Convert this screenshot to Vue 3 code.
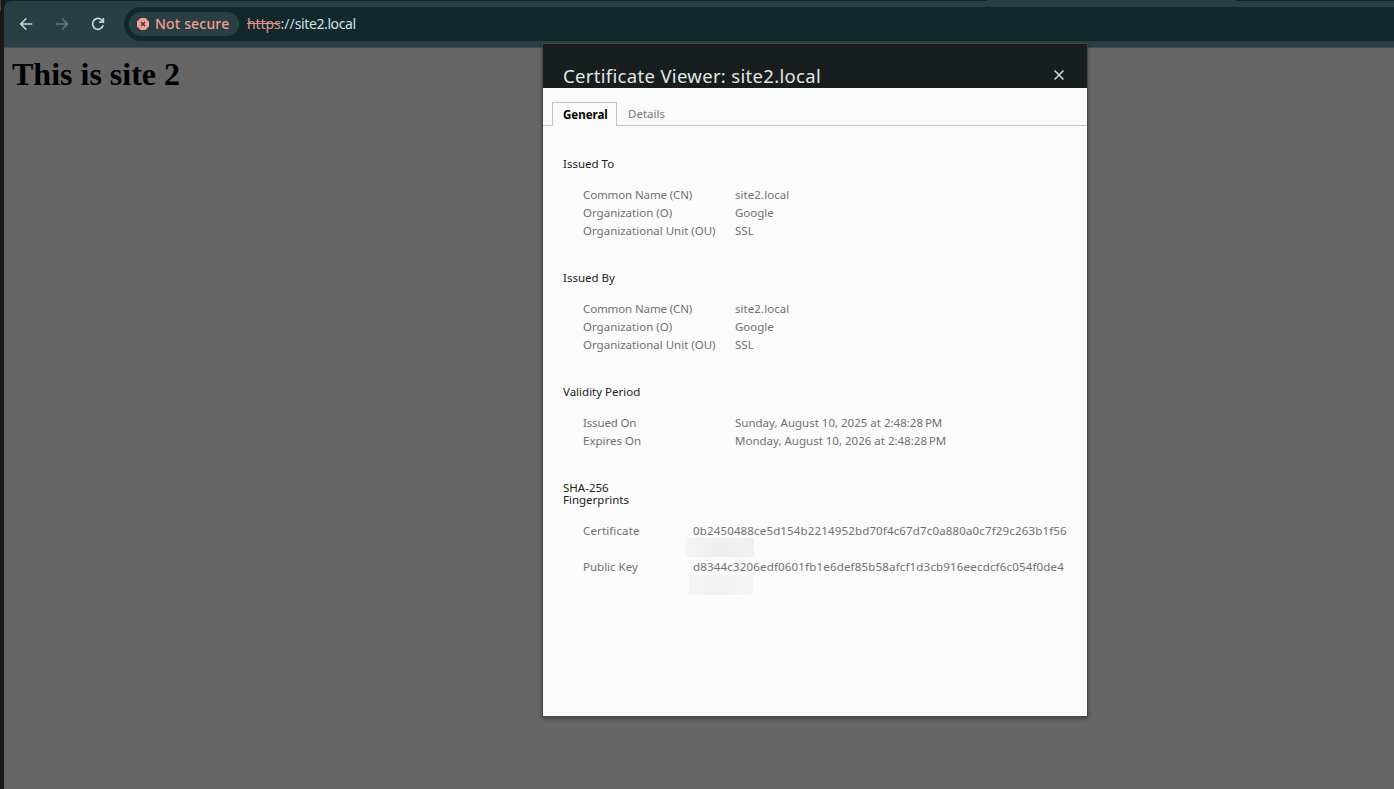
<script setup>
const subject = [
  { label: 'Common Name (CN)', value: 'site2.local', l: 'cn', v: 'site' },
  { label: 'Organization (O)', value: 'Google', l: 'org', v: 'goog' },
  { label: 'Organizational Unit (OU)', value: 'SSL', l: 'ou', v: 'ssl' },
]
const sections = [
  { title: 'Issued To', rows: subject },
  { title: 'Issued By', rows: subject },
  {
    title: 'Validity Period',
    rows: [
      { label: 'Issued On', value: 'Sunday, August 10, 2025 at 2:48:28\u202fPM', l: 'on', v: 'date' },
      { label: 'Expires On', value: 'Monday, August 10, 2026 at 2:48:28\u202fPM', l: 'expires', v: 'date' },
    ],
  },
]
const prints = [
  { label: 'Certificate', value: '0b2450488ce5d154b2214952bd70f4c67d7c0a880a0c7f29c263b1f56', l: 'cert', v: 'hash-a' },
  { label: 'Public Key', value: 'd8344c3206edf0601fb1e6def85b58afcf1d3cb916eecdcf6c054f0de4', l: 'key', v: 'hash-b' },
]
</script>

<template>
  <div class="window">
    <div class="edge"><i></i></div>
    <div class="browser">
      <div class="tabstrip"><i></i></div>
      <div class="toolbar">
        <svg class="nav" width="16" height="16" viewBox="0 0 16 16"><path d="M14.3 8H3.3M8.3 2.5L2.8 8L8.3 13.5" /></svg>
        <svg class="nav off" width="16" height="16" viewBox="0 0 16 16"><path d="M2 8H13M8 2.5L13.5 8L8 13.5" /></svg>
        <svg class="nav" width="16" height="16" viewBox="0 0 16 16"><path d="M13.2 9.3A5.4 5.4 0 1 1 12.3 4.6L13.2 5.8M13.4 2V6.2H9.1" /></svg>
        <div class="omnibox">
          <div class="chip">
            <svg width="12" height="12" viewBox="0 0 12 12"><path class="badge" d="M3.6 0H8.4L12 3.6V8.4L8.4 12H3.6L0 8.4V3.6Z" /><path class="cross" d="M4 4L8 8M8 4L4 8" /></svg>
            <span>Not secure</span>
          </div>
          <div class="url"><s>https</s><span>://</span><b>site2.local</b></div>
        </div>
      </div>
      <div class="page"><h1>This is site 2</h1></div>
    </div>

    <div class="dialog">
      <header>
        <h2>Certificate Viewer: site2.local</h2>
        <svg width="10" height="10" viewBox="0 0 10 10"><path d="M.5 .5L9.5 9.5M9.5 .5L.5 9.5" /></svg>
      </header>
      <nav class="tabs">
        <div class="tab active"><span>General</span></div>
        <div class="tab"><span>Details</span></div>
      </nav>
      <main>
        <section v-for="s in sections" :key="s.title">
          <h3>{{ s.title }}</h3>
          <div v-for="r in s.rows" :key="r.label" class="row">
            <span :class="r.l">{{ r.label }}</span>
            <span :class="r.v">{{ r.value }}</span>
          </div>
        </section>
        <section>
          <h3>SHA-256<br />Fingerprints</h3>
          <div v-for="p in prints" :key="p.label" class="row print">
            <span :class="p.l">{{ p.label }}</span>
            <div>
              <span :class="p.v">{{ p.value }}</span>
              <i class="redacted" :class="'r-' + p.v"></i>
            </div>
          </div>
        </section>
      </main>
    </div>
  </div>
</template>

<style>
body { margin: 0; overflow: hidden; }
</style>

<style scoped>
* { box-sizing: border-box; }
.window { position: relative; display: flex; width: 1394px; height: 789px; overflow: hidden; background: #666; font-family: "Noto Sans", "Open Sans", sans-serif; }
.edge { width: 4px; background: #1a1817; }
.edge i { display: block; width: 1px; height: 11px; background: #444; }
.browser { flex: 1; display: flex; flex-direction: column; background: #0d2428; }
.tabstrip { height: 1px; }
.tabstrip i { display: block; width: 249px; height: 1px; margin-left: 983px; background: #293f44; }
.toolbar { height: 47px; display: flex; align-items: flex-start; background: #293f44; border-bottom: 1px solid #3e4f57; border-top-left-radius: 8px; padding-left: 14px; }
.nav { margin: 15px 20px 0 0; fill: none; stroke: #c0d6d9; stroke-width: 1.7; }
.nav.off { stroke: #63777a; }
.omnibox { flex: 1; height: 34px; margin: 6px 0 0 -2px; padding-left: 5px; display: flex; align-items: center; background: #11292d; border-radius: 17px 0 0 17px; white-space: nowrap; }
.chip { width: 110px; height: 24px; padding-left: 8px; display: flex; align-items: center; gap: 6px; background: #293f44; border-radius: 12px; color: #f2a095; font-size: 14px; line-height: 24px; font-weight: 500; letter-spacing: .18px; }
.badge { fill: #f2a095; stroke: none; }
.cross { stroke: #293f44; stroke-width: 1.5; }
.url { display: flex; margin-left: 8px; font-size: 14px; line-height: 24px; color: #c9d9db; }
.url s { color: #e29389; letter-spacing: -.1px; }
.url b { font-weight: 400; letter-spacing: -.4px; color: #d5e0e1; }
.page { flex: 1; background: #666; }
h1 { margin: 8px 0 0 8px; font: bold 32px/37px "Liberation Serif", serif; color: #000; }
.dialog { position: absolute; left: 542px; top: 43px; width: 546px; height: 674px; display: flex; flex-direction: column; border: 1px solid #3b494b; background: #fbfbfb; box-shadow: 0 2px 4px rgba(0,0,0,.3); }
header { height: 44px; flex: none; display: flex; justify-content: space-between; align-items: flex-start; padding: 20px 23px 0 20px; background: #181e1e; color: #e1e5e5; }
h2 { margin: 0; font-size: 18.5px; line-height: 24px; font-weight: 400; letter-spacing: .32px; white-space: nowrap; }
header svg { margin-top: 6px; fill: none; stroke: #d3d7d7; stroke-width: 1.5; }
.tabs { height: 38px; flex: none; display: flex; align-items: flex-end; padding-left: 9px; border-bottom: 1px solid #c4c4c4; font-size: 11.5px; line-height: 23px; color: #777; }
.tab { height: 23px; padding-left: 11px; }
.active { width: 65px; height: 24px; margin-bottom: -1px; padding-left: 10px; border: 1px solid #c4c4c4; border-bottom: 0; background: #fbfbfb; color: #000; font-weight: 700; }
main { padding: 32px 0 0 20px; display: flex; flex-direction: column; gap: 32px; font-size: 11.5px; color: #707070; }
h3 { margin: 0 0 16px; font-size: 11.5px; line-height: 12px; font-weight: 400; color: #222; }
.row { display: grid; grid-template-columns: 152px 1fr; padding-left: 20px; line-height: 18px; white-space: nowrap; }
.row > span { justify-self: start; }
.cn { letter-spacing: -.12px; }
.site { letter-spacing: .06px; }
.on { letter-spacing: -.15px; }
.cert { letter-spacing: .13px; }
.hash-a { letter-spacing: .155px; }
.hash-b { letter-spacing: .18px; }
.print { grid-template-columns: 110px 1fr; height: 36px; }
.print div { position: relative; }
.redacted { position: absolute; background: linear-gradient(100deg, #f5f5f5, #eee 45%, #f1f1f1); }
.r-hash-a { left: -7px; top: 16px; width: 68px; height: 19px; }
.r-hash-b { left: -4px; top: 17px; width: 64px; height: 20px; background: linear-gradient(100deg, #f5f5f5, #f1f1f1 45%, #f4f4f4); }
</style>
